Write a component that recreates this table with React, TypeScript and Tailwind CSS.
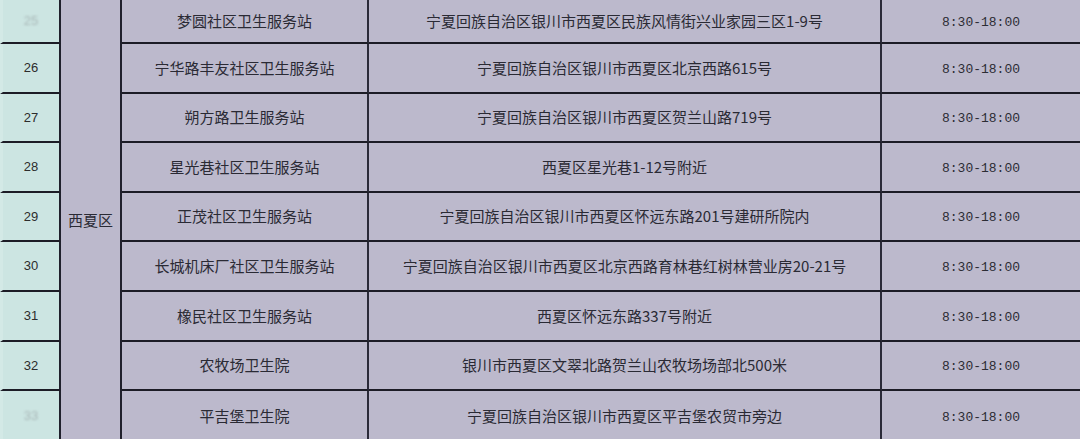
const rows = [
  { no: "25", name: "梦圆社区卫生服务站", addr: "宁夏回族自治区银川市西夏区民族风情街兴业家园三区1-9号", hours: "8:30-18:00", faded: true },
  { no: "26", name: "宁华路丰友社区卫生服务站", addr: "宁夏回族自治区银川市西夏区北京西路615号", hours: "8:30-18:00" },
  { no: "27", name: "朔方路卫生服务站", addr: "宁夏回族自治区银川市西夏区贺兰山路719号", hours: "8:30-18:00" },
  { no: "28", name: "星光巷社区卫生服务站", addr: "西夏区星光巷1-12号附近", hours: "8:30-18:00" },
  { no: "29", name: "正茂社区卫生服务站", addr: "宁夏回族自治区银川市西夏区怀远东路201号建研所院内", hours: "8:30-18:00" },
  { no: "30", name: "长城机床厂社区卫生服务站", addr: "宁夏回族自治区银川市西夏区北京西路育林巷红树林营业房20-21号", hours: "8:30-18:00" },
  { no: "31", name: "橡民社区卫生服务站", addr: "西夏区怀远东路337号附近", hours: "8:30-18:00" },
  { no: "32", name: "农牧场卫生院", addr: "银川市西夏区文翠北路贺兰山农牧场场部北500米", hours: "8:30-18:00" },
  { no: "33", name: "平吉堡卫生院", addr: "宁夏回族自治区银川市西夏区平吉堡农贸市旁边", hours: "8:30-18:00", faded: true },
]

const cjk = "font-['Noto_Sans_CJK_SC',sans-serif] text-[15px] text-[#2a2a34]"

export default function App() {
  return (
    <div className="w-[1080px] h-[439px] overflow-hidden bg-[#bcb9cc]">
      <div className="grid grid-cols-[61px_61px_247px_513px_198px] grid-rows-[44px_repeat(8,49.6px)]">
        {/* merged district cell */}
        <div className={`col-start-2 row-start-1 row-span-9 flex items-center justify-center border-r-2 border-[#20202c] ${cjk}`}>
          西夏区
        </div>

        {rows.map((r, i) => {
          const last = i === rows.length - 1
          const line = last ? "" : "border-b-2 border-b-[#1c1c26]"
          return (
            <div key={r.no} className="contents">
              <div
                style={{ gridRow: i + 1 }}
                className={`col-start-1 flex items-center justify-center bg-[#cce5e2] border-r-2 border-r-[#20202c] border-l-[3px] border-l-[#d3e9e6] ${line} font-['Liberation_Sans',sans-serif] text-[13px] text-[#2c2c2c]`}
              >
                <span className={r.faded ? "text-[#a9b8b8] blur-[1px]" : ""}>{r.no}</span>
              </div>
              <div
                style={{ gridRow: i + 1 }}
                className={`col-start-3 flex items-center justify-center border-r-2 border-r-[#2a2a38] ${line} ${cjk}`}
              >
                {r.name}
              </div>
              <div
                style={{ gridRow: i + 1 }}
                className={`col-start-4 flex items-center justify-center border-r-2 border-r-[#2a2a38] ${line} ${cjk}`}
              >
                {r.addr}
              </div>
              <div
                style={{ gridRow: i + 1 }}
                className={`col-start-5 flex items-center justify-center pt-[3px] ${line} font-['Liberation_Mono',monospace] text-[13px] text-[#2c2c34]`}
              >
                {r.hours}
              </div>
            </div>
          )
        })}
      </div>
    </div>
  )
}
